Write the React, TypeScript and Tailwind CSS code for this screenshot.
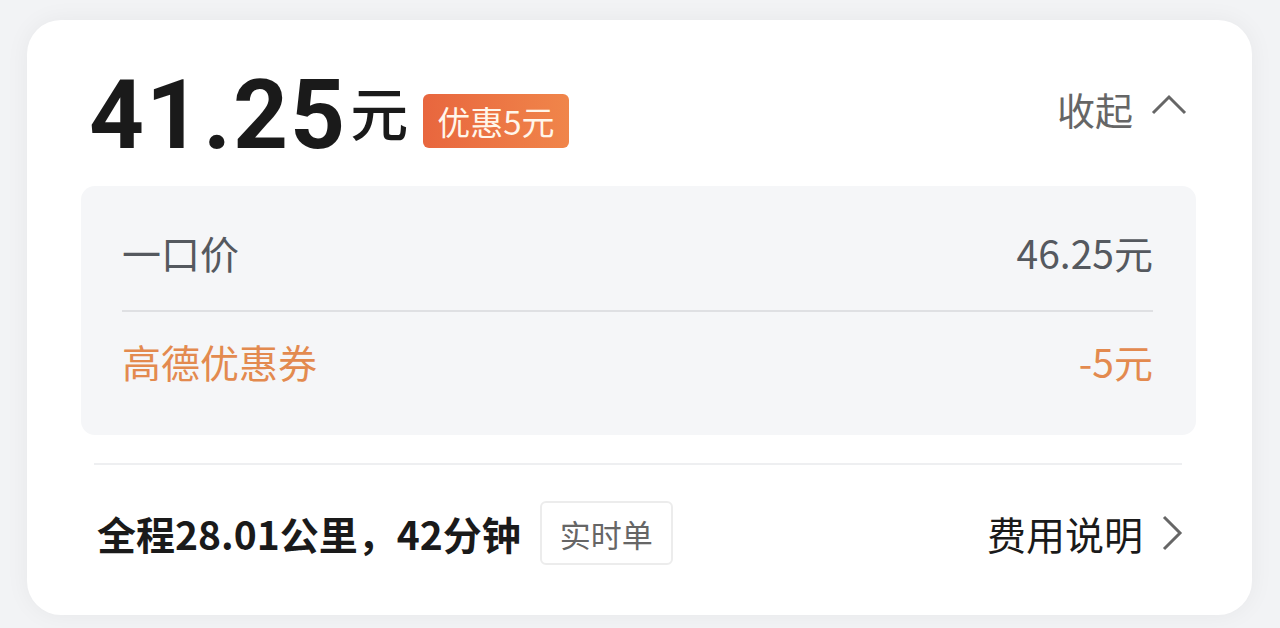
import React from "react";

const cjk = { fontFamily: '"Noto Sans CJK SC", "Noto Sans", sans-serif' };

export default function App() {
  return (
    <div className="min-h-screen w-[1280px] h-[628px] bg-[#f2f3f5] pt-[20px] pl-[27px] overflow-hidden" style={cjk}>
      <div className="w-[1225px] h-[595px] bg-white rounded-[34px] shadow-[0_0_24px_rgba(0,0,0,0.05)] pt-[47px] flex flex-col">
        {/* header */}
        <div className="h-[96px] flex items-start justify-between pl-[62px] pr-[65px]">
          <div className="flex items-start">
            <span
              className="text-[96px] leading-none font-bold text-[#1a1a1a] tracking-[2px]"
              style={{ fontFamily: 'Roboto, "Liberation Sans", sans-serif' }}
            >
              41.25
            </span>
            <span className="mt-[15px] text-[58px] leading-none font-medium text-[#1a1a1a] ml-[3px]">元</span>
            <span className="mt-[27px] ml-[15px] h-[54px] px-[14px] flex items-center rounded-[6px] bg-gradient-to-r from-[#e8663e] to-[#f0854a] text-[#fff6ea] text-[33px] leading-none">
              优惠5元
            </span>
          </div>
          <div className="mt-[23px] flex items-center text-[#666666] text-[38px] leading-none">
            <span>收起</span>
            <svg width="36" height="22" viewBox="0 0 36 22" className="ml-[18px] mt-[-10px]">
              <path d="M2 20 L18 4 L34 20" fill="none" stroke="#666666" strokeWidth="3" />
            </svg>
          </div>
        </div>

        {/* detail box */}
        <div className="mt-[23px] ml-[54px] mr-[56px] h-[249px] bg-[#f5f6f8] rounded-[14px] pl-[41px] pr-[43px] flex flex-col">
          <div className="h-[124px] pt-[8px] flex items-center justify-between text-[39px] text-[#55595f] leading-none">
            <span>一口价</span>
            <span>46.25元</span>
          </div>
          <div className="h-[2px] bg-[#dfe0e3]" />
          <div className="flex-1 pb-[24px] flex items-center justify-between text-[39px] text-[#e38a4f] leading-none">
            <span>高德优惠券</span>
            <span>-5元</span>
          </div>
        </div>

        <div className="mt-[28px] ml-[67px] mr-[70px] h-[2px] bg-[#eeeff1]" />

        {/* bottom row */}
        <div className="h-[136px] flex items-center justify-between pl-[70px] pr-[69px]">
          <div className="flex items-center">
            <span className="text-[39px] font-bold text-[#1a1a1a] leading-none">全程28.01公里，42分钟</span>
            <span className="ml-[19px] h-[64px] px-[18px] flex items-center border-2 border-[#ececec] rounded-[6px] text-[31px] text-[#666666] leading-none">
              实时单
            </span>
          </div>
          <div className="flex items-center text-[39px] text-[#1a1a1a] leading-none">
            <span>费用说明</span>
            <svg width="22" height="36" viewBox="0 0 22 36" className="ml-[18px]">
              <path d="M3 2 L19 18 L3 34" fill="none" stroke="#666666" strokeWidth="3" />
            </svg>
          </div>
        </div>
      </div>
    </div>
  );
}
